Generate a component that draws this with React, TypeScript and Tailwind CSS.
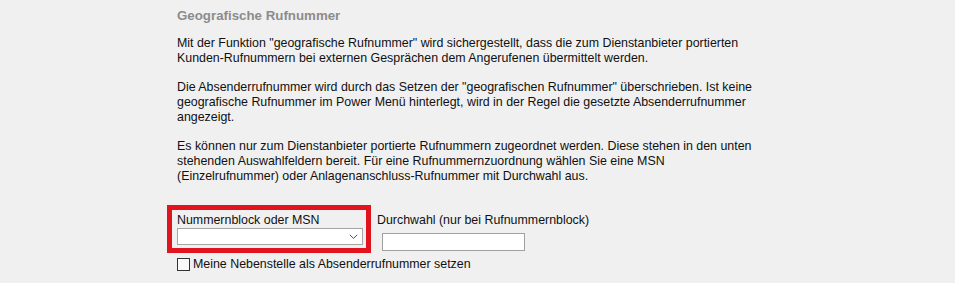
import React from "react"

const font = { fontFamily: '"Liberation Sans", Arial, sans-serif' }

function Chevron() {
  return (
    <svg width="9" height="6" viewBox="0 0 9 6" className="text-[#505050]">
      <path d="M0.8 0.8 L4.5 4.4 L8.2 0.8" fill="none" stroke="currentColor" strokeWidth="1" />
    </svg>
  )
}

export default function App() {
  return (
    <div className="min-h-[283px] w-full bg-[#f0f0f0] text-[12.4px] text-[#111]" style={font}>
      <div className="pl-[177px] pt-[8px] w-[757px]">
        <h2 className="text-[13.3px] leading-[16px] font-bold text-[#8c8c8c]">Geografische Rufnummer</h2>

        <div className="mt-[12px] flex flex-col gap-[14px] leading-[15px]">
          <p>
            Mit der Funktion "geografische Rufnummer" wird sichergestellt, dass die zum Dienstanbieter portierten
            Kunden-Rufnummern bei externen Gesprächen dem Angerufenen übermittelt werden.
          </p>
          <p>
            Die Absenderrufnummer wird durch das Setzen der "geografischen Rufnummer" überschrieben. Ist keine
            geografische Rufnummer im Power Menü hinterlegt, wird in der Regel die gesetzte Absenderrufnummer
            angezeigt.
          </p>
          <p>
            Es können nur zum Dienstanbieter portierte Rufnummern zugeordnet werden. Diese stehen in den unten
            stehenden Auswahlfeldern bereit. Für eine Rufnummernzuordnung wählen Sie eine MSN
            (Einzelrufnummer) oder Anlagenanschluss-Rufnummer mit Durchwahl aus.
          </p>
        </div>
      </div>

      <div className="pl-[167px] mt-[21px] flex items-start">
        <div className="border-[5px] border-[#e1141e] pl-[5px] pr-[3px] pt-[3px] pb-[3px]">
          <label className="block leading-[15px]">Nummernblock oder MSN</label>
          <div className="w-[186px] h-[17px] bg-white border border-[#a5a5a5] flex items-center justify-end pr-[4px]">
            <Chevron />
          </div>
        </div>

        <div className="ml-[6px] mt-[8px]">
          <label className="block leading-[15px]">Durchwahl (nur bei Rufnummernblock)</label>
          <input
            type="text"
            className="block mt-[5px] ml-[5px] w-[143px] h-[18px] bg-white border border-[#a0a0a0] outline-none"
          />
        </div>
      </div>

      <label className="pl-[177px] mt-[4px] flex items-center gap-[3px] leading-[15px]">
        <span className="w-[13px] h-[13px] border border-[#333] bg-[#fafafa] inline-block" />
        <span>Meine Nebenstelle als Absenderrufnummer setzen</span>
      </label>
    </div>
  )
}
